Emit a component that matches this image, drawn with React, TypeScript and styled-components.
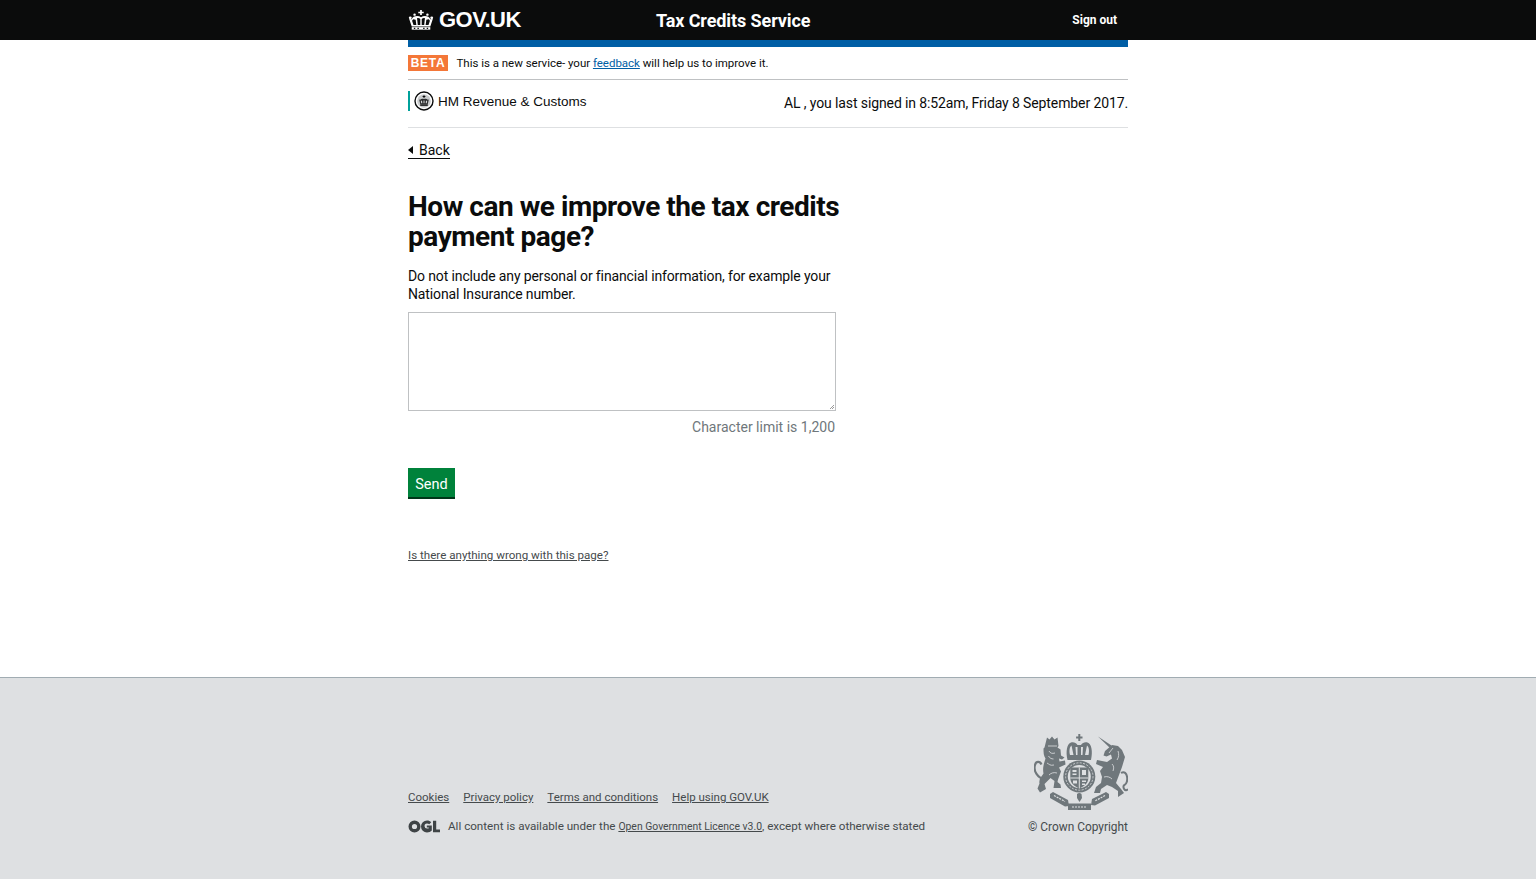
import React from 'react';
import styled, { createGlobalStyle } from 'styled-components';

const textFont = `Roboto, 'Liberation Sans', Arial, sans-serif`;

const GlobalStyle = createGlobalStyle`
  html, body {
    margin: 0;
    padding: 0;
    background: #fff;
    color: #0b0c0c;
    font-family: ${textFont};
  }
`;

const Page = styled.div`
  min-height: 879px;
  display: flex;
  flex-direction: column;
`;

const Header = styled.header`
  height: 40px;
  background: #0b0c0c;
`;

const Wrap = styled.div`
  width: 720px;
  margin: 0 auto;
`;

const HeaderInner = styled(Wrap)`
  height: 40px;
  display: flex;
  align-items: center;
`;

const Logo = styled.a`
  display: flex;
  align-items: center;
  gap: 5px;
  width: 248px;
  color: #fff;
  font-family: 'Liberation Sans', Arial, sans-serif;
  font-size: 22px;
  font-weight: 700;
  letter-spacing: -0.5px;
`;

const ServiceName = styled.a`
  color: #fff;
  font-size: 18px;
  font-weight: 700;
  letter-spacing: -0.1px;
  flex: 1;
`;

const SignOut = styled.a`
  color: #fff;
  font-size: 12px;
  font-weight: 700;
  margin-right: 11px;
`;

const BlueBar = styled(Wrap)`
  height: 7px;
  background: #005ea5;
`;

const PhaseBanner = styled(Wrap)`
  height: 33px;
  box-sizing: border-box;
  border-bottom: 1px solid #bfc1c3;
  display: flex;
  align-items: center;
  padding-bottom: 1px;
`;

const PhaseTag = styled.strong`
  width: 40px;
  height: 16px;
  background: #f47738;
  color: #fff;
  font-family: 'Liberation Sans', Arial, sans-serif;
  font-size: 12px;
  line-height: 16px;
  letter-spacing: 0.7px;
  text-align: center;
  margin-right: 8.5px;
`;

const PhaseText = styled.span`
  font-size: 11.5px;
  letter-spacing: -0.02px;
`;

const BlueLink = styled.a`
  color: #005ea5;
  text-decoration: underline;
`;

const Proposition = styled(Wrap)`
  height: 48px;
  box-sizing: border-box;
  border-bottom: 1px solid #dee0e2;
  display: flex;
  justify-content: space-between;
  padding-top: 11px;
`;

const Department = styled.div`
  height: 20px;
  border-left: 2px solid #00a19b;
  padding-left: 4px;
  display: flex;
  align-items: center;
  gap: 4px;
  font-family: 'Liberation Sans', Arial, sans-serif;
  font-size: 13.5px;
`;

const LastSigned = styled.div`
  font-size: 14px;
  line-height: 24px;
  letter-spacing: -0.11px;
`;

const BackLink = styled.a`
  display: inline-flex;
  align-items: center;
  gap: 6px;
  margin-top: 13px;
  height: 17px;
  border-bottom: 1px solid #0b0c0c;
  font-size: 14px;
  color: #0b0c0c;
`;

const BackArrow = styled.span`
  width: 0;
  height: 0;
  border-top: 4px solid transparent;
  border-bottom: 4px solid transparent;
  border-right: 5px solid #0b0c0c;
`;

const Main = styled(Wrap)`
  flex: 1;
`;

const Heading = styled.h1`
  width: 460px;
  margin: 33px 0 0;
  font-size: 28px;
  line-height: 30px;
  font-weight: 700;
  letter-spacing: -0.45px;
`;

const Hint = styled.p`
  width: 440px;
  margin: 15px 0 0;
  font-size: 14px;
  line-height: 18px;
  letter-spacing: -0.13px;
`;

const Field = styled.div`
  width: 428px;
  margin-top: 9px;
`;

const Area = styled.textarea`
  display: block;
  width: 428px;
  height: 99px;
  box-sizing: border-box;
  border: 1px solid #bfc1c3;
  margin: 0;
  padding: 5px;
  resize: none;
  background: linear-gradient(135deg, transparent 50%, #9a9a9a 50%, #9a9a9a 60%, transparent 60%, transparent 75%, #9a9a9a 75%, #9a9a9a 85%, transparent 85%) no-repeat right 1px bottom 1px / 5px 5px, #fff;
`;

const Limit = styled.div`
  margin-top: 7px;
  padding-right: 1px;
  text-align: right;
  font-size: 14px;
  line-height: 18px;
  color: #6f777b;
`;

const SendButton = styled.button`
  display: block;
  width: 47px;
  height: 31px;
  margin-top: 32px;
  padding: 3px 0 0;
  border: 0;
  border-bottom: 2px solid #003618;
  background: #00823b;
  color: #fff;
  font-family: ${textFont};
  font-size: 14.5px;
`;

const ProblemLink = styled.a`
  display: inline-block;
  margin-top: 48px;
  font-size: 11.6px;
  line-height: 16px;
  color: #454a4c;
  text-decoration: underline;
`;

const Footer = styled.footer`
  height: 202px;
  box-sizing: border-box;
  background: #dee0e2;
  border-top: 1px solid #a1acb2;
`;

const FooterInner = styled(Wrap)`
  height: 100%;
  display: flex;
  justify-content: space-between;
  align-items: flex-end;
  padding-bottom: 44px;
  box-sizing: border-box;
`;

const FooterLinks = styled.div`
  display: flex;
  gap: 14px;
  margin-bottom: 13px;
`;

const FooterLink = styled.a`
  font-size: 11.5px;
  line-height: 16px;
  color: #454a4c;
  text-decoration: underline;
`;

const Licence = styled.div`
  display: flex;
  align-items: center;
  gap: 8px;
  font-size: 11.65px;
  line-height: 16px;
  color: #454a4c;
`;

const SmallLink = styled.a`
  font-size: 10.4px;
  color: #454a4c;
  text-decoration: underline;
`;

const CopyrightBlock = styled.div`
  display: flex;
  flex-direction: column;
  align-items: flex-end;
  gap: 8px;
  font-size: 11.9px;
  line-height: 16px;
  color: #454a4c;
`;

const CrownIcon = () => (
  <svg width="26" height="20" viewBox="0 0 36 28" fill="#fff">
    <path d="M16.800 0h2.400v2.400h2.600v2.200h-2.600v2.400h-2.400V4.600h-2.600V2.400h2.600z" />
    <circle cx="3" cy="11" r="2" />
    <circle cx="33" cy="11" r="2" />
    <circle cx="9" cy="6.500" r="1.700" />
    <circle cx="27" cy="6.500" r="1.700" />
    <path d="M5 23 1.500 12.500l3.500.5C6 10 9 8.500 12.500 8.500c2 0 4 .5 5.500 1.500 1.500-1 3.500-1.500 5.500-1.500C27 8.500 30 10 31 13l3.500-.5L31 23zm2.500-2h4l-1-7.500-3.500-.5-1.500 2zm6 0h3.500v-8.500c-1-1-3-1.500-4.500-1zm5.500 0h3.500l1-9.500c-1.500-.5-3.500 0-4.500 1zm5.500 0h4l2-6-1.500-2-3.500.5z" fillRule="evenodd" />
    <path d="M5 24h26v3.500H5z" />
    <path d="M8 25h2v1.500H8zM13 25h2v1.500h-2zM21 25h2v1.500h-2zM26 25h2v1.500h-2z" fill="#0b0c0c" />
  </svg>
);

const HmrcCrest = () => (
  <svg width="20" height="20" viewBox="0 0 20 20">
    <circle cx="10" cy="10" r="9" fill="#fff" stroke="#0b0c0c" strokeWidth="1.400" />
    <circle cx="10" cy="10" r="6.800" fill="#c9cbcc" />
    <path d="M9.500 4.200h1v.9h.9v.9h-.9v1h-1V6h-.9v-.9h.9z" fill="#0b0c0c" />
    <path d="M5.200 8.500l1 .2c.9-1 2.300-1.200 3.800-.6 1.500-.6 2.900-.4 3.800.6l1-.2-1 4.500H6.200z" fill="#2c2e2f" />
    <path d="M6.800 9.800h1.200l.3 2.400H7.200zM9.500 9.500h1v2.700h-1zM12 9.800h1.200l-.4 2.400H11.700z" fill="#d5d7d8" />
    <path d="M6.200 13.300h7.600v1.500H6.200z" fill="#0b0c0c" />
  </svg>
);

const OglLogo = () => (
  <svg width="32" height="13" viewBox="0 0 32 13" fill="#3f4446">
    <path d="M6.500.500a6 6 0 1 1 0 12 6 6 0 0 1 0-12zm0 3.400a2.600 2.600 0 1 0 0 5.200 2.600 2.600 0 0 0 0-5.200z" fillRule="evenodd" />
    <path d="M19 .500c1.800 0 3.200.600 4.200 1.700l-1.900 2c-.6-.500-1.300-.800-2.300-.800a2.600 2.600 0 1 0 .3 5.200c.7 0 1.200-.200 1.500-.400v-.800h-2V5.600h5v4.900c-1.100 1.200-2.800 2-4.800 2a6 6 0 1 1 0-12z" />
    <path d="M25 .800h3.200v8.700H32v2.700h-7z" />
  </svg>
);

const RoyalArms = () => (
  <svg width="94" height="78" viewBox="0 0 94 78" fill="#6f777b">
    {/* central crown */}
    <path d="M44.300 1h2v2.500h2.200v2h-2.200V8h-2V5.500h-2.200v-2h2.200z" />
    <path d="M33.500 27c-2-9-.5-16 3.500-17.500 3-.7 5 .5 6.500 2.500h3.500c1.500-2 3.500-3.200 6.500-2.500 4 1.500 5.500 8.500 3.500 17.500z" />
    <path d="M36 22c-1-4-.5-8 1.500-9.500l2 9.500zM42 22l-.5-8h2v8zM47 22v-8h2l-.5 8zM51 22l2-9.500c2 1.500 2.500 5.500 1.500 9.500z" fill="#dee0e2" />
    {/* garter ring and shield */}
    <circle cx="45.300" cy="43.500" r="16" />
    <circle cx="45.300" cy="43.500" r="11.500" fill="#dee0e2" />
    <circle cx="45.300" cy="43.500" r="13.700" fill="none" stroke="#dee0e2" strokeWidth="0.800" strokeDasharray="2 1.400" />
    <path d="M36.300 34.500h18V45c0 5.500-4.500 8.500-9 10.500-4.500-2-9-5-9-10.500z" />
    <path d="M44.800 34.500h1v21h-1zM36.300 44.500h18v1h-18z" fill="#dee0e2" />
    <path d="M38.500 37h4v2h-4zM38.500 40.500h4v1.500h-4zM48 37h4v5h-4zM39 47.500h4v3h-4zM48 47.500h4v1.500h-4zM48 50.500h3v1.500h-3z" fill="#dee0e2" />
    {/* lion */}
    <path d="M13 4.500l2.500 2 2.500-3 2.500 3 3-2 1 8.500-1 1.500 3 2 .5 6 3.500 2-2.500 2-3-1 .5 3 5.500-1 .5 4-6.500 3 2 4-3 8-.500 2.500 3 2.500.500 3.500h-7.500l1-7-4-3-6 6 1.500 5-6 3.500-2.500-4 2-5c-1-4 2-7 4-10-1-5 0-9 2-15-2-3-2-6-2-10l1-1z" />
    <path d="M10 46C4 45-1 38 1 32c1-4 5-4 6.500-.5" fill="none" stroke="#6f777b" strokeWidth="2.200" />
    <path d="M14 13h9M15 18c1 2 3 3 6 2M14.500 23c1 2 3 3 5 3M13 30c2 1 3 3 7 2M15 42c2-2 5-3 8-2" fill="none" stroke="#dee0e2" strokeWidth="0.800" />
    {/* unicorn */}
    <path d="M64 3.500 77.500 12.500 76 15z" />
    <path d="M78 12l-7 6-1.500 4.500 3 1 4.500-2 1 4-5 3.500-10-2-1 4 7 3-3 4 2 6-1 6-5 4-2 6h6l1-4 6-4 5 2 6 4v6l6-4-3-4-5-6 3-8 3-8 3-10-3-7-4-4z" />
    <path d="M87 40c7-4 8 10 3.500 12-3 1.500 1 8 3.500 4" fill="none" stroke="#6f777b" strokeWidth="2" />
    <path d="M79 15l-4 5M84 18c1 3 1 6-1 9M78 31c2 2 2 4 1 7M70 44c3-1 6 0 8 2" fill="none" stroke="#dee0e2" strokeWidth="0.800" />
    {/* motto */}
    <path d="M16 61l3-2 15 8 1 6-4 .500-15-8.500zM75 61l-3-2-14 7-1 6 4 .500 14-7.500z" />
    <path d="M34 70.500h23v6.500H34z" />
    <path d="M43 61c1.500-1.500 3-1.500 4.500 0l.5 4-2.500 4-2.500-4z" />
    <path d="M20 62.500 31 68.500M71 62.500 61 68M38 74h15" fill="none" stroke="#dee0e2" strokeWidth="1.200" strokeDasharray="2 1" />
  </svg>
);

const App = () => (
  <Page>
    <GlobalStyle />
    <Header>
      <HeaderInner>
        <Logo>
          <CrownIcon />
          GOV.UK
        </Logo>
        <ServiceName>Tax Credits Service</ServiceName>
        <SignOut>Sign out</SignOut>
      </HeaderInner>
    </Header>
    <BlueBar />
    <PhaseBanner>
      <PhaseTag>BETA</PhaseTag>
      <PhaseText>
        This is a new service- your <BlueLink>feedback</BlueLink> will help us to improve it.
      </PhaseText>
    </PhaseBanner>
    <Proposition>
      <Department>
        <HmrcCrest />
        HM Revenue &amp; Customs
      </Department>
      <LastSigned>AL , you last signed in 8:52am, Friday 8 September 2017.</LastSigned>
    </Proposition>
    <Main>
      <BackLink>
        <BackArrow />
        Back
      </BackLink>
      <Heading>How can we improve the tax credits payment page?</Heading>
      <Hint>Do not include any personal or financial information, for example your National Insurance number.</Hint>
      <Field>
        <Area />
        <Limit>Character limit is 1,200</Limit>
      </Field>
      <SendButton>Send</SendButton>
      <ProblemLink>Is there anything wrong with this page?</ProblemLink>
    </Main>
    <Footer>
      <FooterInner>
        <div>
          <FooterLinks>
            <FooterLink>Cookies</FooterLink>
            <FooterLink>Privacy policy</FooterLink>
            <FooterLink>Terms and conditions</FooterLink>
            <FooterLink>Help using GOV.UK</FooterLink>
          </FooterLinks>
          <Licence>
            <OglLogo />
            <span>
              All content is available under the <SmallLink>Open Government Licence v3.0</SmallLink>, except where otherwise stated
            </span>
          </Licence>
        </div>
        <CopyrightBlock>
          <RoyalArms />
          © Crown Copyright
        </CopyrightBlock>
      </FooterInner>
    </Footer>
  </Page>
);

export default App;
